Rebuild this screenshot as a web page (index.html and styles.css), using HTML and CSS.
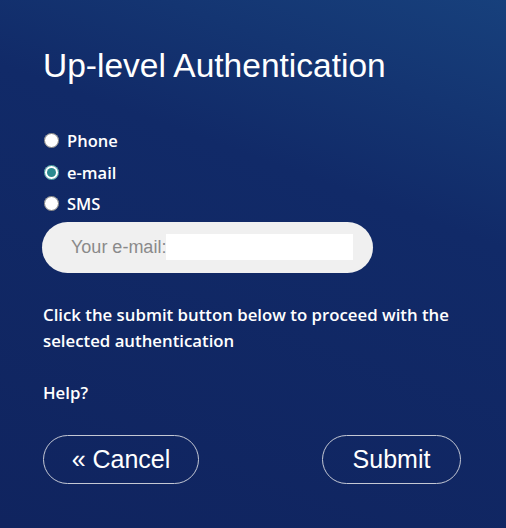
FILE: index.html
```html
<!DOCTYPE html>
<html lang="en">
  <head>
    <meta charset="UTF-8" />
    <meta name="viewport" content="width=device-width, initial-scale=1.0" />
    <title>Up-level Authentication</title>
    <link rel="stylesheet" href="styles.css">
  </head>
  <body>
    <div class="panel">
      <h1 class="title">Up-level Authentication</h1>

      <form id="authForm">
        <div class="options">
          <label class="option"><input type="radio" name="method" value="phone" /> Phone</label>
          <label class="option"><input type="radio" name="method" value="email" checked /> e-mail</label>
          <label class="option"><input type="radio" name="method" value="sms" /> SMS</label>
        </div>

        <div class="field">
          <label for="email">Your e-mail:</label>
          <input type="text" id="email" name="email" />
        </div>

        <p class="note">Click the submit button below to proceed with the selected authentication</p>
        <p class="help">Help?</p>

        <div class="actions">
          <button type="button" class="btn cancel">&laquo; Cancel</button>
          <button type="submit" class="btn submit">Submit</button>
        </div>
      </form>
    </div>
  </body>
</html>
```

FILE: styles.css
```css
/* General Reset */
* {
  margin: 0;
  padding: 0;
  box-sizing: border-box;
}

body {
  font-family: "Liberation Sans", Arial, sans-serif;
  background: linear-gradient(200deg, #17407c 0%, #112a68 35%, #10245f 100%);
  color: #fff;
  min-height: 100vh;
}

.panel {
  padding: 46px 45px 0 43px;
}

.title {
  font-size: 33.5px;
  font-weight: 400;
  line-height: 40px;
  margin-bottom: 39px;
}

.options {
  display: flex;
  flex-direction: column;
}

.option {
  display: flex;
  align-items: center;
  height: 31.5px;
  font-family: "Open Sans", "Liberation Sans", sans-serif;
  font-weight: 600;
  font-size: 16.5px;
}

.option input {
  width: 15px;
  height: 15px;
  margin: 0 8px 0 1px;
  accent-color: #2b8a8f;
}

.field {
  display: flex;
  align-items: center;
  width: 331px;
  height: 51px;
  margin-top: 2px;
  margin-left: -1px;
  padding: 0 20px 0 29px;
  background: #f0f0f0;
  border-radius: 26px;
}

.field label {
  color: #8a8a8a;
  font-size: 18px;
}

.field input {
  flex: 1;
  height: 26px;
  border: none;
  outline: none;
  background: #fff;
}

.note {
  margin-top: 29px;
  font-family: "Open Sans", "Liberation Sans", sans-serif;
  font-weight: 600;
  font-size: 16.8px;
  line-height: 26px;
}

.help {
  margin-top: 27px;
  font-family: "Open Sans", "Liberation Sans", sans-serif;
  font-weight: 600;
  font-size: 16.8px;
}

.actions {
  display: flex;
  justify-content: space-between;
  margin-top: 31px;
}

.btn {
  height: 49px;
  font-family: "Liberation Sans", Arial, sans-serif;
  font-size: 25px;
  color: #fff;
  background: transparent;
  border: 1.5px solid #c4c8d4;
  border-radius: 25px;
  cursor: pointer;
}

.btn.cancel {
  width: 156px;
}

.btn.submit {
  width: 139px;
}
```
